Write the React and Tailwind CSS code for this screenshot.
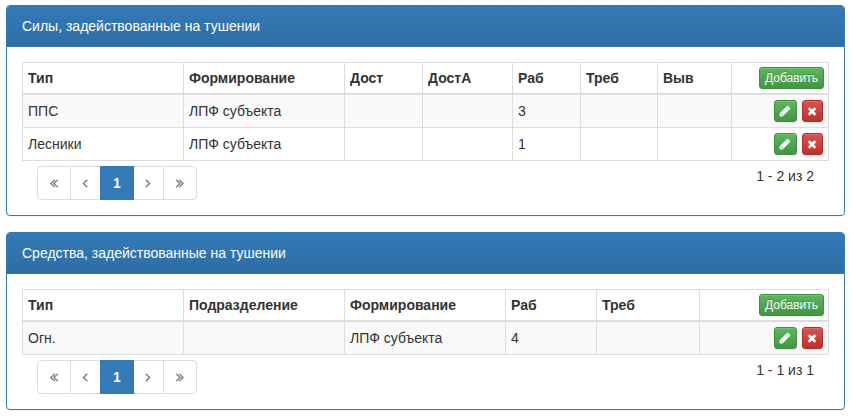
import React from "react";

const ICONS = {
  pencil:
    "M491 1536l91-91-235-235-91 91v107h128v128h107zm523-928q0-22-22-22-10 0-17 7l-542 542q-7 7-7 17 0 22 22 22 10 0 17-7l542-542q7-7 7-17zm-54-192l416 416-832 832h-416v-416zm683 96q0 53-37 90l-166 166-416-416 166-165q36-38 90-38 53 0 91 38l235 234q37 39 37 91z",
  times:
    "M1490 1322q0 40-28 68l-136 136q-28 28-68 28t-68-28l-294-294-294 294q-28 28-68 28t-68-28l-136-136q-28-28-28-68t28-68l294-294-294-294q-28-28-28-68t28-68l136-136q28-28 68-28t68 28l294 294 294-294q28-28 68-28t68 28l136 136q28 28 28 68t-28 68l-294 294 294 294q28 28 28 68z",
  first:
    "M1011 1376q0 13-10 23l-50 50q-10 10-23 10t-23-10l-466-466q-10-10-10-23t10-23l466-466q10-10 23-10t23 10l50 50q10 10 10 23t-10 23l-393 393 393 393q10 10 10 23zm384 0q0 13-10 23l-50 50q-10 10-23 10t-23-10l-466-466q-10-10-10-23t10-23l466-466q10-10 23-10t23 10l50 50q10 10 10 23t-10 23l-393 393 393 393q10 10 10 23z",
  last:
    "M979 960q0 13-10 23l-466 466q-10 10-23 10t-23-10l-50-50q-10-10-10-23t10-23l393-393-393-393q-10-10-10-23t10-23l50-50q10-10 23-10t23 10l466 466q10 10 10 23zm384 0q0 13-10 23l-466 466q-10 10-23 10t-23-10l-50-50q-10-10-10-23t10-23l393-393-393-393q-10-10-10-23t10-23l50-50q10-10 23-10t23 10l466 466q10 10 10 23z",
  prev:
    "M1203 544q0 13-10 23l-393 393 393 393q10 10 10 23t-10 23l-50 50q-10 10-23 10t-23-10l-466-466q-10-10-10-23t10-23l466-466q10-10 23-10t23 10l50 50q10 10 10 23z",
  next:
    "M1171 960q0 13-10 23l-466 466q-10 10-23 10t-23-10l-50-50q-10-10-10-23t10-23l393-393-393-393q-10-10-10-23t10-23l50-50q10-10 23-10t23 10l466 466q10 10 10 23z",
};

const forces = {
  title: "Силы, задействованные на тушении",
  columns: [
    { label: "Тип", width: 161 },
    { label: "Формирование", width: 161 },
    { label: "Дост", width: 78 },
    { label: "ДостА", width: 90 },
    { label: "Раб", width: 68 },
    { label: "Треб", width: 77 },
    { label: "Выв", width: 74 },
  ],
  rows: [
    ["ППС", "ЛПФ субъекта", "", "", "3", "", ""],
    ["Лесники", "ЛПФ субъекта", "", "", "1", "", ""],
  ],
  summary: "1 - 2 из 2",
};

const equipment = {
  title: "Средства, задействованные на тушении",
  columns: [
    { label: "Тип", width: 161 },
    { label: "Подразделение", width: 161 },
    { label: "Формирование", width: 161 },
    { label: "Раб", width: 91 },
    { label: "Треб", width: 103 },
  ],
  rows: [["Огн.", "", "ЛПФ субъекта", "4", ""]],
  summary: "1 - 1 из 1",
};

const Icon = ({ name, className }) => (
  <svg viewBox="0 0 1792 1792" fill="currentColor" className={className}>
    <path d={ICONS[name]} />
  </svg>
);

const Button = ({ danger, className, children }) => (
  <button
    type="button"
    className={`flex h-[22px] items-center justify-center rounded-[3px] border text-[12px] leading-[18px] font-normal text-white [text-shadow:0_-1px_0_rgba(0,0,0,0.2)] shadow-[inset_0_1px_0_rgba(255,255,255,0.15),0_1px_1px_rgba(0,0,0,0.075)] ${
      danger
        ? "border-[#b92c28] bg-linear-to-b from-[#d9534f] to-[#c12e2a]"
        : "border-[#3e8f3e] bg-linear-to-b from-[#5cb85c] to-[#419641]"
    } ${className}`}
  >
    {children}
  </button>
);

const Pagination = () => (
  <div className="flex h-[34px] text-[#777]">
    <button className="flex w-[34px] items-center justify-center rounded-l border border-[#ddd]">
      <Icon name="first" className="size-3.5 stroke-current stroke-[50px]" />
    </button>
    <button className="-ml-px flex w-[31px] items-center justify-center border border-[#ddd]">
      <Icon name="prev" className="mr-px size-3.5 stroke-current stroke-[50px]" />
    </button>
    <button className="z-10 -ml-px flex w-[34px] items-center justify-center bg-[#337ab7] font-bold text-white">
      1
    </button>
    <button className="-ml-px flex w-[31px] items-center justify-center border border-[#ddd]">
      <Icon name="next" className="mr-px size-3.5 stroke-current stroke-[50px]" />
    </button>
    <button className="-ml-px flex w-[34px] items-center justify-center rounded-r border border-[#ddd]">
      <Icon name="last" className="size-3.5 stroke-current stroke-[50px]" />
    </button>
  </div>
);

const Panel = ({ title, columns, rows, summary }) => (
  <div className="overflow-hidden rounded border border-[#337ab7] bg-white shadow-[0_1px_2px_rgba(0,0,0,0.05)]">
    <div className="flex h-[41px] items-center border-b border-[#337ab7] bg-linear-to-b from-[#337ab7] to-[#2e6da4] px-[15px] text-white">
      {title}
    </div>
    <div className="p-[15px]">
      <table className="w-full table-fixed border-separate border-spacing-0 border-t border-l border-[#ddd]">
        <colgroup>
          {columns.map((col) => (
            <col key={col.label} style={{ width: col.width }} />
          ))}
          <col />
        </colgroup>
        <thead>
          <tr className="h-8">
            {columns.map((col) => (
              <th
                key={col.label}
                className="border-r border-b-2 border-[#ddd] px-[5px] py-0 text-left font-bold"
              >
                {col.label}
              </th>
            ))}
            <th className="border-r border-b-2 border-[#ddd] py-0 pr-1">
              <Button className="ml-auto w-[65px]">Добавить</Button>
            </th>
          </tr>
        </thead>
        <tbody>
          {rows.map((row) => (
            <tr key={row[0]} className="h-[33px] odd:bg-[#f9f9f9]">
              {row.map((value, i) => (
                <td key={i} className="border-r border-b border-[#ddd] px-[5px] py-0">
                  {value}
                </td>
              ))}
              <td className="border-r border-b border-[#ddd] py-0 pr-[5px]">
                <div className="flex justify-end gap-[5px]">
                  <Button className="w-[23px]">
                    <Icon name="pencil" className="mr-px size-3 stroke-current stroke-[60px]" />
                  </Button>
                  <Button danger className="w-[21px]">
                    <Icon name="times" className="mr-px size-3 stroke-current stroke-[40px]" />
                  </Button>
                </div>
              </td>
            </tr>
          ))}
        </tbody>
      </table>
      <div className="mt-[5px] flex items-start justify-between px-[15px]">
        <Pagination />
        <div>{summary}</div>
      </div>
    </div>
  </div>
);

export default function App() {
  return (
    <div className="flex h-[418px] w-[853px] flex-col gap-4 bg-white pt-[5px] pr-2 pl-1.5 font-['Liberation_Sans',Arial,sans-serif] text-[14px] leading-5 text-[#333]">
      <Panel {...forces} />
      <Panel {...equipment} />
    </div>
  );
}
